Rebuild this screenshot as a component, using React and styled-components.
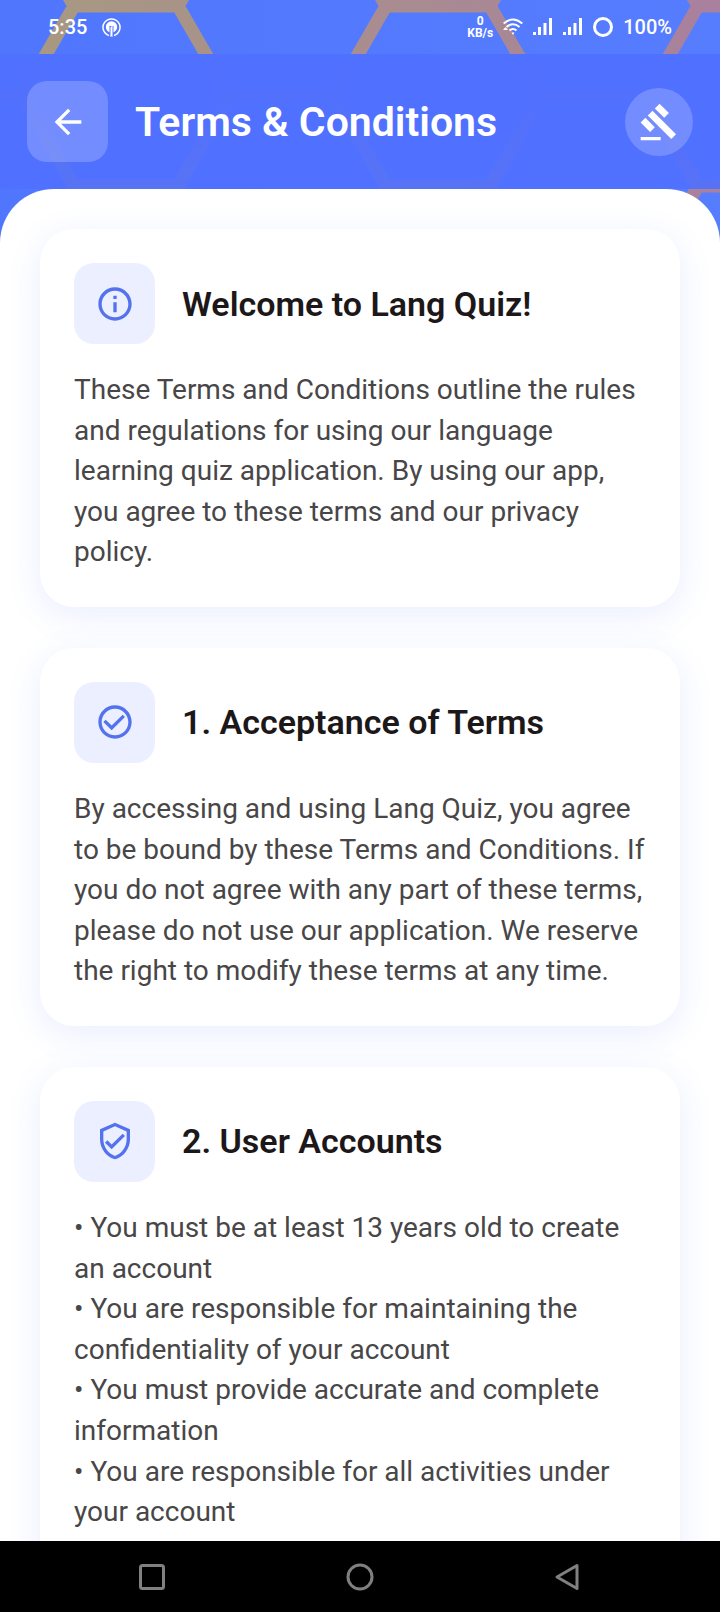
import React from 'react';
import styled, { createGlobalStyle } from 'styled-components';
import { MdArrowBack, MdGavel, MdInfoOutline, MdCheckCircleOutline, MdOutlineVerifiedUser } from 'react-icons/md';

const GlobalStyle = createGlobalStyle`
  * { box-sizing: border-box; }
  html, body, #root { height: 100%; }
  body { margin: 0; font-family: Roboto, sans-serif; background: #000; }
`;

const Screen = styled.div`
  position: relative;
  height: 100%;
  display: flex;
  flex-direction: column;
  overflow: hidden;
  background: linear-gradient(90deg, #5076fe, #567dfe);
`;

const Pattern = styled.svg`
  position: absolute;
  top: 0;
  left: 0;
  width: 100%;
  height: 260px;
`;

const StatusBar = styled.div`
  position: relative;
  flex: none;
  height: 54px;
  padding: 0 48px;
  display: flex;
  align-items: center;
  justify-content: space-between;
  color: #fff;
  font-size: 20px;
  font-weight: 500;
`;

const StatusGroup = styled.div`
  display: flex;
  align-items: center;
  gap: ${(p) => p.$gap}px;
`;

const Speed = styled.span`
  font-size: 12px;
  line-height: 12px;
  font-weight: 700;
  text-align: center;
`;

const Header = styled.header`
  position: relative;
  flex: none;
  height: 135px;
  padding: 0 27px;
  display: flex;
  align-items: center;
  gap: 27px;
  color: #fff;
  background: linear-gradient(180deg, #5070ff, #5070fffa 40%, #5070ffe8);
`;

const BackButton = styled.button`
  width: 81px;
  height: 81px;
  padding: 0;
  border: 0;
  border-radius: 20px;
  display: grid;
  place-items: center;
  color: inherit;
  background: rgba(255, 255, 255, 0.2);
`;

const Title = styled.h1`
  flex: 1;
  margin: 0;
  font-size: 41px;
  line-height: 48px;
  font-weight: 600;
`;

const Emblem = styled.div`
  width: 68px;
  height: 68px;
  border-radius: 50%;
  display: grid;
  place-items: center;
  background: rgba(255, 255, 255, 0.2);
`;

const Sheet = styled.main`
  position: relative;
  flex: 1;
  min-height: 0;
  overflow-y: auto;
  scrollbar-width: none;
  padding: 40px;
  display: flex;
  flex-direction: column;
  gap: 41px;
  border-radius: 54px 54px 0 0;
  background: #fff;
`;

const Card = styled.section`
  flex: none;
  padding: 34px;
  border-radius: 34px;
  background: #fff;
  box-shadow: 0 8px 34px rgba(80, 112, 255, 0.12);
`;

const CardHead = styled.div`
  display: flex;
  align-items: center;
  gap: 27px;
  margin-bottom: 26px;
`;

const IconTile = styled.div`
  width: 81px;
  height: 81px;
  border-radius: 20px;
  display: grid;
  place-items: center;
  color: #5472ee;
  background: #ebefff;
`;

const CardTitle = styled.h2`
  margin: 0;
  color: #1c1718;
  font-size: 34px;
  line-height: 40px;
  font-weight: 600;
`;

const CardText = styled.p`
  margin: 0;
  color: #484647;
  font-size: 28px;
  line-height: 1.45;
  white-space: pre-line;
`;

const NavBar = styled.nav`
  position: relative;
  flex: none;
  height: 71px;
  padding: 0 48px;
  display: flex;
  background: #000;
`;

const NavButton = styled.button`
  flex: 1;
  padding: 0;
  border: 0;
  display: grid;
  place-items: center;
  background: none;
  color: #808080;
`;

const sections = [
  {
    title: 'Welcome to Lang Quiz!',
    Icon: MdInfoOutline,
    text: `These Terms and Conditions outline the rules
and regulations for using our language
learning quiz application. By using our app,
you agree to these terms and our privacy
policy.`,
  },
  {
    title: '1. Acceptance of Terms',
    Icon: MdCheckCircleOutline,
    text: `By accessing and using Lang Quiz, you agree
to be bound by these Terms and Conditions. If
you do not agree with any part of these terms,
please do not use our application. We reserve
the right to modify these terms at any time.`,
  },
  {
    title: '2. User Accounts',
    Icon: MdOutlineVerifiedUser,
    text: `• You must be at least 13 years old to create
an account
• You are responsible for maintaining the
confidentiality of your account
• You must provide accurate and complete
information
• You are responsible for all activities under
your account
• We reserve the right to terminate accounts`,
  },
];

const HEX = 'l52 -90 h104 l52 90 l-52 90 h-104 z';
const cells = [];
for (let column = 0; column < 8; column += 1) {
  for (let row = -1; row < 3; row += 1) {
    cells.push([22 - 156 + column * 156, 96 + row * 180 + (column % 2 ? 0 : -90)]);
  }
}

function Honeycomb() {
  return (
    <Pattern aria-hidden="true">
      <defs>
        <linearGradient id="comb" x1="0" y1="0" x2="720" y2="0" gradientUnits="userSpaceOnUse">
          <stop offset="0" stopColor="#a89a80" />
          <stop offset="1" stopColor="#a9809e" />
        </linearGradient>
      </defs>
      <path d={cells.map(([x, y]) => `M${x} ${y}${HEX}`).join(' ')} fill="none" stroke="url(#comb)" strokeWidth="13" />
    </Pattern>
  );
}

function Signal() {
  return (
    <svg width="20" height="18" viewBox="0 0 20 18" fill="currentColor" aria-hidden="true">
      <path d="M0 14h3v3H0zM5 9h3v8H5zM10.500 5h3v12h-3zM16 0h3v17h-3z" />
    </svg>
  );
}

export default function App() {
  return (
    <>
      <GlobalStyle />
      <Screen>
        <Honeycomb />
        <StatusBar>
          <StatusGroup $gap={15}>
            <span>5:35</span>
            <svg width="19" height="19" viewBox="0 0 19 19" fill="none" stroke="currentColor" aria-hidden="true">
              <path d="M7 17.500A8.500 8.500 0 1 1 12 17.500" strokeWidth="1.500" />
              <circle cx="9.500" cy="9" r="5.700" fill="currentColor" stroke="none" />
              <path d="M9.500 9v9.500" strokeWidth="3" />
              <path d="M7.500 8.500h2M8 8.500v9M11 8v10" stroke="#5479fa" strokeWidth="1" />
            </svg>
          </StatusGroup>
          <StatusGroup $gap={10}>
            <Speed>0<br />KB/s</Speed>
            <svg width="20" height="18" viewBox="0 0 20 18" fill="none" stroke="currentColor" strokeWidth="2" aria-hidden="true">
              <path d="M.700 5.500Q10-2.500 19.300 5.500M3.500 9Q10 3.500 16.500 9M6.500 12.500Q10 9.500 13.500 12.500" />
              <path d="M8.500 14.500h3L10 17zM0 12l2.500-3L5 12z" fill="currentColor" stroke="none" />
            </svg>
            <Signal />
            <Signal />
            <svg width="20" height="20" viewBox="0 0 20 20" fill="none" stroke="currentColor" strokeWidth="3" aria-hidden="true">
              <circle cx="10" cy="10" r="8.500" />
            </svg>
            <span>100%</span>
          </StatusGroup>
        </StatusBar>
        <Header>
          <BackButton type="button" aria-label="Back"><MdArrowBack size={40} /></BackButton>
          <Title>Terms &amp; Conditions</Title>
          <Emblem><MdGavel size={40} /></Emblem>
        </Header>
        <Sheet>
          {sections.map(({ title, Icon, text }) => (
            <Card key={title}>
              <CardHead>
                <IconTile><Icon size={40} /></IconTile>
                <CardTitle>{title}</CardTitle>
              </CardHead>
              <CardText>{text}</CardText>
            </Card>
          ))}
        </Sheet>
        <NavBar aria-label="System">
          <NavButton type="button" aria-label="Recent apps">
            <svg width="28" height="28" viewBox="0 0 28 28" fill="none" stroke="currentColor" strokeWidth="3">
              <rect x="2.500" y="2.500" width="23" height="23" rx="2" />
            </svg>
          </NavButton>
          <NavButton type="button" aria-label="Home">
            <svg width="28" height="28" viewBox="0 0 28 28" fill="none" stroke="currentColor" strokeWidth="3">
              <circle cx="14" cy="14" r="12" />
            </svg>
          </NavButton>
          <NavButton type="button" aria-label="Back">
            <svg width="28" height="28" viewBox="0 0 28 28" fill="none" stroke="currentColor" strokeWidth="3" strokeLinejoin="round">
              <path d="M23 2.500v23L3 14z" />
            </svg>
          </NavButton>
        </NavBar>
      </Screen>
    </>
  );
}
